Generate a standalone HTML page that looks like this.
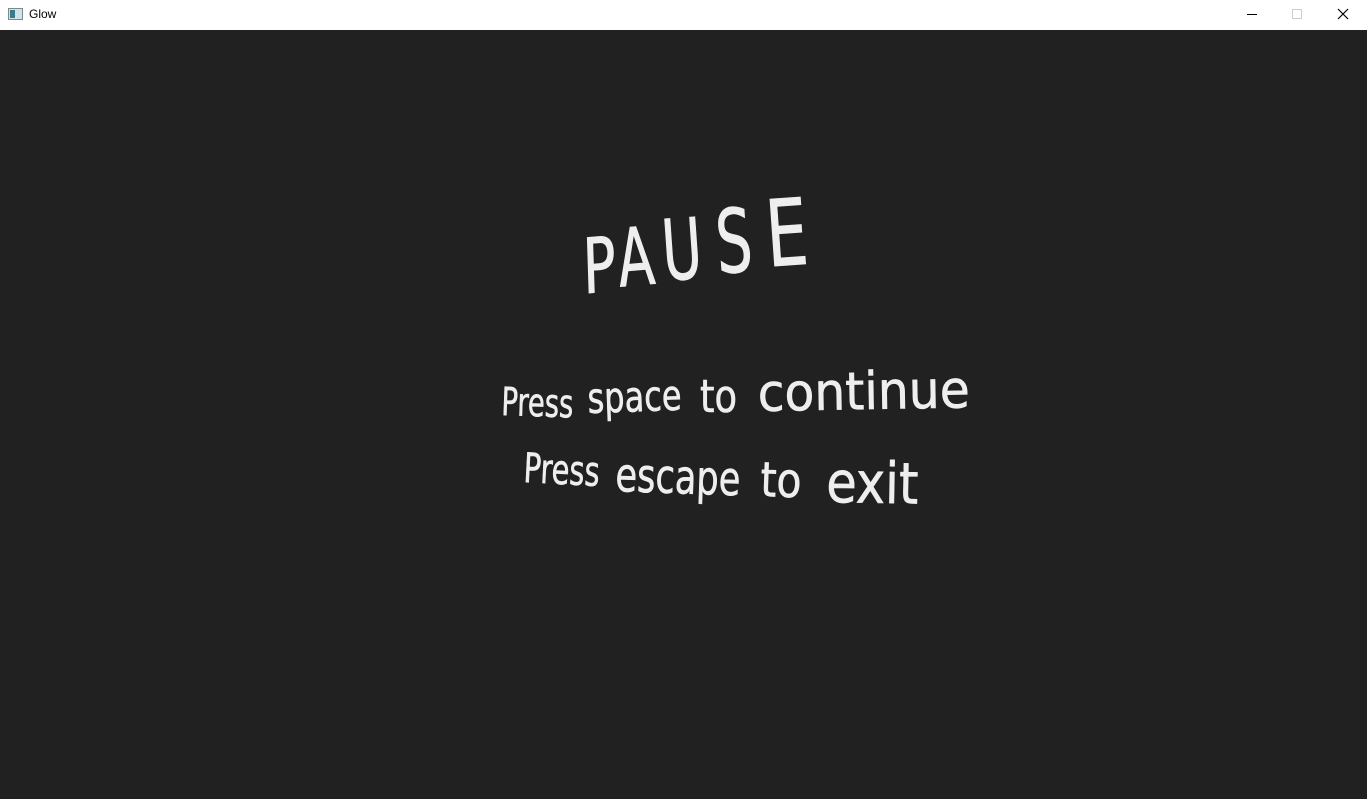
<!DOCTYPE html>
<html><head><meta charset="utf-8"><style>
html,body{margin:0;padding:0;width:1367px;height:799px;overflow:hidden;background:#212121;font-family:"Liberation Sans",sans-serif}
.tb{position:absolute;left:0;top:0;width:1367px;height:30px;background:#fff}
svg{position:absolute;left:0;top:0}
</style></head><body>
<div class="tb">
<svg width="1367" height="30">
<rect x="8.5" y="8.5" width="14" height="11" fill="#cfe3e8" stroke="#7a8a90"/>
<rect x="10" y="10" width="5" height="8" fill="#3c7a8a"/>
<line x1="1247" y1="14.5" x2="1257" y2="14.5" stroke="#000"/>
<rect x="1292.5" y="9.5" width="9" height="9" fill="none" stroke="#ccc"/>
<path d="M1338 9L1348 19M1348 9L1338 19" stroke="#000" stroke-width="1.2"/>
</svg>
<div style="position:absolute;left:29px;top:7px;font-size:12px;color:#000">Glow</div>
</div>
<svg width="1367" height="799" font-family="'DejaVu Sans Condensed','Liberation Sans Narrow',sans-serif" fill="#eeeeee" stroke="#eeeeee" stroke-width="0.8" text-anchor="middle">
<text transform="translate(600 292) rotate(-5) scale(0.8 1) skewX(-4)" font-size="76">P</text>
<text transform="translate(638 285) rotate(-5) scale(0.74 1)" font-size="80">A</text>
<text transform="translate(684 279) rotate(-4) scale(0.72 1)" font-size="84">U</text>
<text transform="translate(736 272) rotate(-4) scale(0.72 1)" font-size="88">S</text>
<text transform="translate(789 265) rotate(-4) scale(0.8 1)" font-size="92">E</text>
<g text-anchor="start" stroke-width="0.6">
<text x="501" y="415" font-size="39" textLength="72" lengthAdjust="spacingAndGlyphs" transform="rotate(2 501 415)">Press</text>
<text x="588" y="413" font-size="42" textLength="94" lengthAdjust="spacingAndGlyphs" transform="rotate(-2 588 413)">space</text>
<text x="700" y="412" font-size="45" textLength="37" lengthAdjust="spacingAndGlyphs">to</text>
<text x="758" y="411" font-size="52" textLength="212" lengthAdjust="spacingAndGlyphs" transform="rotate(-1 758 411)">continue</text>
<text x="523" y="482" font-size="41" textLength="76" lengthAdjust="spacingAndGlyphs" transform="rotate(3 523 482)">Press</text>
<text x="615" y="491" font-size="47" textLength="125" lengthAdjust="spacingAndGlyphs" transform="rotate(2 615 491)">escape</text>
<text x="760" y="496" font-size="48" textLength="41" lengthAdjust="spacingAndGlyphs" transform="rotate(2 760 496)">to</text>
<text x="826" y="502" font-size="57" textLength="92" lengthAdjust="spacingAndGlyphs" transform="rotate(1 826 502)">exit</text>
</g>
</svg>
</body></html>
